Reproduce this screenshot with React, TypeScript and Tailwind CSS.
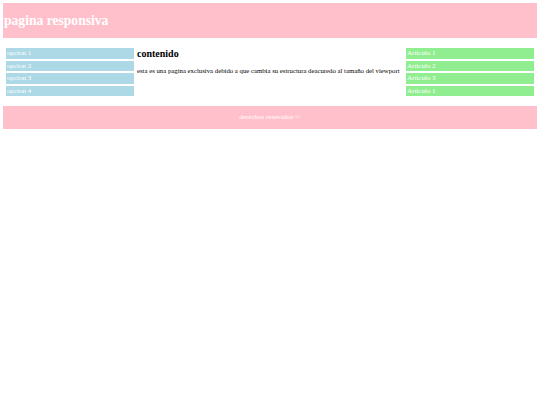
import React from 'react';

const opciones = ['opcion 1', 'opcion 2', 'opcion 3', 'opcion 4'];
const articulos = ['Articulo 1', 'Articulo 2', 'Articulo 3', 'Articulo 1'];

const App: React.FC = () => {
  return (
    <div className="min-h-[405px] bg-white p-[3px] font-['Liberation_Serif',serif]">
      <header className="h-[35px] bg-[#ffc0cb] flex items-center px-[1px]">
        <h1 className="text-white font-bold text-[13.6px] leading-none mt-[1px]">pagina responsiva</h1>
      </header>

      <div className="flex mt-[10px] px-[3px] gap-[3px]">
        <nav className="w-[128px] flex flex-col gap-[2px] shrink-0">
          {opciones.map(o => (
            <div key={o} className="h-[10.5px] bg-[#add8e6] text-white text-[7px] leading-[10.5px] pl-[1px]">{o}</div>
          ))}
        </nav>

        <main className="flex-1">
          <h2 className="font-bold text-[10px] leading-none mt-[1px]">contenido</h2>
          <p className="text-[6.75px] leading-none mt-[9px] text-black">
            esta es una pagina exclusiva debido a que cambia su estructura deacuredo al tamaño del viewport
          </p>
        </main>

        <aside className="w-[128px] flex flex-col gap-[2px] shrink-0">
          {articulos.map((a, i) => (
            <div key={i} className="h-[10.5px] bg-[#90ee90] text-white text-[7px] leading-[10.5px] pl-[1px]">{a}</div>
          ))}
        </aside>
      </div>

      <footer className="mt-[10px] h-[23px] bg-[#ffc0cb] flex items-center justify-center">
        <span className="text-white text-[7px]">derechos resevados ©</span>
      </footer>
    </div>
  );
};

export default App;
